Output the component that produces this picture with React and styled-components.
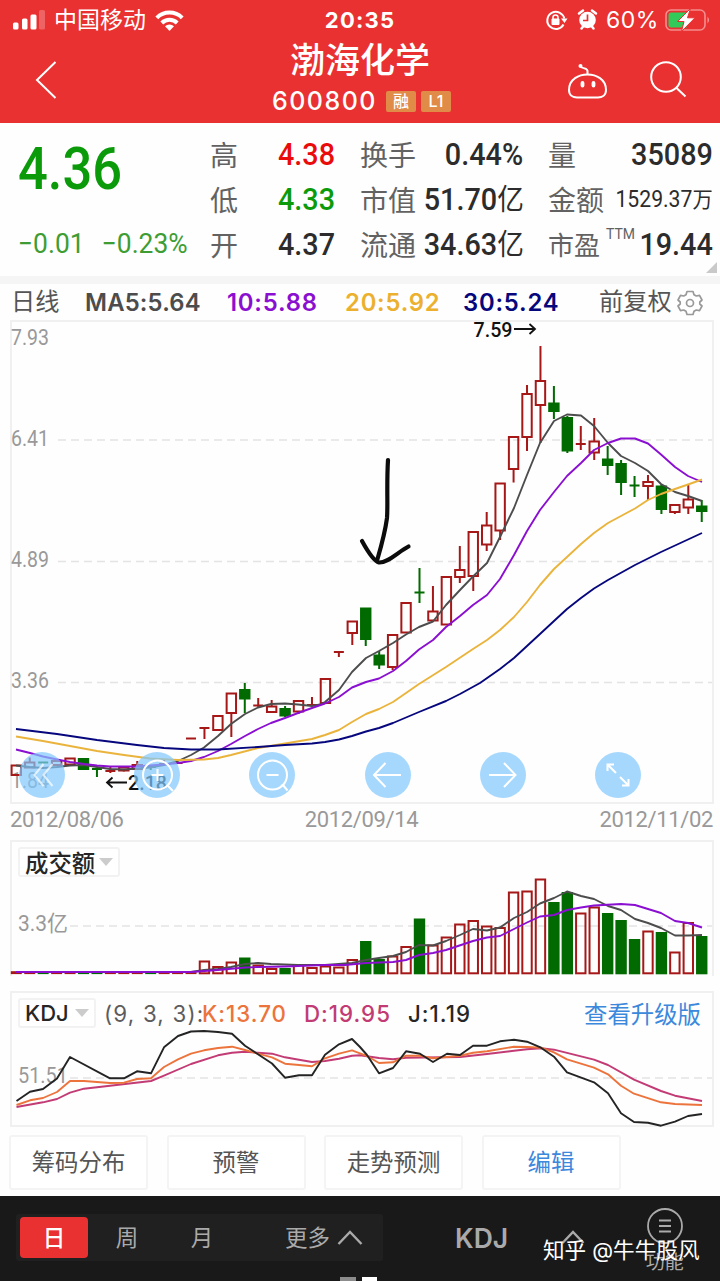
import React from "react";
import styled, { createGlobalStyle } from "styled-components";

const GlobalStyle = createGlobalStyle`
  * {
    box-sizing: border-box;
  }
  body {
    margin: 0;
    background: #fff;
    font-family: "Inter", "Noto Sans CJK SC", sans-serif;
  }
  svg {
    display: block;
    overflow: visible;
  }
`;

const din = `"Roboto", "Noto Sans CJK SC", sans-serif`;
const RED = "#a61818";
const GREEN = "#016a01";
const GRAY = "#4d4d4d";
const PURPLE = "#8a0fd0";
const GOLD = "#eab43c";
const NAVY = "#06067d";

const Screen = styled.div`
  width: 720px;
  height: 1281px;
  display: flex;
  flex-direction: column;
  background: #fefefe;
  overflow: hidden;
`;

/* ---------- header ---------- */

const Header = styled.header`
  height: 123px;
  background: #e93131;
  color: #fff;
`;

const StatusBar = styled.div`
  height: 40px;
  display: grid;
  grid-template-columns: 240px 240px 240px;
  align-items: center;
  font-size: 23px;
  line-height: 40px;
`;

const StatusLeft = styled.div`
  display: flex;
  align-items: center;
  gap: 9px;
  padding-left: 13px;
`;

const StatusRight = styled.div`
  display: flex;
  align-items: center;
  padding-left: 65px;
`;

const Clock = styled.div`
  text-align: center;
  font-size: 22px;
  font-weight: 700;
  letter-spacing: 1.2px;
`;

const Battery = styled.div`
  font-size: 23px;
  letter-spacing: 0.5px;
  margin: 0 7px 0 8px;
  width: 52px;
`;

const TitleRow = styled.div`
  height: 83px;
  display: grid;
  grid-template-columns: 240px 240px 240px;
`;

const TitleBack = styled.div`
  padding: 20px 0 0 34px;
`;

const TitleIcons = styled.div`
  display: flex;
  padding: 21px 0 0 85px;
  gap: 40px;
`;

const Title = styled.div`
  display: flex;
  flex-direction: column;
  align-items: center;
`;

const StockName = styled.div`
  font-size: 35px;
  line-height: 40px;
  font-weight: 500;
`;

const StockCode = styled.div`
  display: flex;
  align-items: center;
  gap: 5px;
  height: 42px;
  font-size: 25px;
  letter-spacing: 1.5px;
  font-weight: 500;
  padding-left: 3px;
`;

const Tag = styled.span`
  width: 30px;
  height: 21px;
  line-height: 21px;
  margin-left: ${(props) => (props.$first ? "4px" : "0")};
  border-radius: 2px;
  background: #e08c48;
  font-size: 16px;
  letter-spacing: 0;
  text-align: center;
`;

/* ---------- quote ---------- */

const Quote = styled.section`
  height: 161px;
  display: flex;
  border-bottom: 8px solid #f5f5f5;
  font-family: ${din};
  position: relative;
`;

const PriceBlock = styled.div`
  width: 210px;
  flex: none;
  padding: 15px 0 0 18px;
`;

const Price = styled.div`
  height: 62px;
  line-height: 62px;
  font-size: 59px;
  font-weight: 500;
  color: #0a9a0a;
  white-space: nowrap;
  transform: scaleX(0.89);
  transform-origin: left;
`;

const Change = styled.div`
  display: flex;
  gap: 18px;
  margin-top: 27px;
  height: 34px;
  line-height: 34px;
  font-size: 27.8px;
  color: #3d9d33;
  white-space: nowrap;
  transform: scaleX(0.95);
  transform-origin: left;
`;

const StatColumn = styled.div`
  width: ${(props) => props.$width}px;
  margin-right: ${(props) => (props.$last ? 0 : 24.5)}px;
  flex: none;
  padding-top: 9px;
`;

const Stat = styled.div`
  display: flex;
  justify-content: space-between;
  height: 45px;
  line-height: 45px;
  white-space: nowrap;
`;

const StatLabel = styled.span`
  padding-top: 2px;
  font-size: ${(props) => (props.$small ? 26 : 28)}px;
  color: #626262;
  sup {
    font-size: 14px;
    letter-spacing: 0;
    line-height: 0;
    vertical-align: 16px;
    margin-left: 6px;
  }
`;

const StatValue = styled.span`
  font-size: ${(props) => (props.$small ? 23 : 31.3)}px;
  font-weight: ${(props) => (props.$small ? 400 : 500)};
  color: ${(props) => props.$color || "#2c2c2c"};
  transform: scaleX(0.92);
  transform-origin: right;
  margin-left: -20px;
  > i {
    font-style: normal;
    font-weight: 400;
    font-size: ${(props) => (props.$small ? 22 : 29)}px;
  }
`;

const Corner = styled.i`
  position: absolute;
  right: 3px;
  bottom: 3px;
  border-left: 11px solid transparent;
  border-bottom: 11px solid #c9c9c9;
`;

/* ---------- charts ---------- */

const MaRow = styled.div`
  height: 36px;
  display: grid;
  grid-template-columns: 74px 142px 118px 118px 136px 78px 30px;
  align-items: center;
  padding: 1px 0 0 11px;
`;

const MaText = styled.span`
  color: ${(props) => props.color};
  font-weight: 600;
  letter-spacing: ${(props) => (props.$tight ? 0.2 : 0.8)}px;
  font-size: 23.8px;
  white-space: nowrap;
`;

const MaLabel = styled.span`
  color: #555;
  font-size: 24.2px;
  line-height: 32px;
  padding-bottom: 2px;
  white-space: nowrap;
`;

const ChartPanel = styled.section`
  display: grid;
  margin-left: 10px;
  width: 704px;
  height: ${(props) => props.$height}px;
  margin-bottom: ${(props) => props.$gap || 0}px;
  border: 2px solid #f0f0f0;
  border-bottom-width: ${(props) => (props.$open ? 0 : 2)}px;
  > * {
    grid-area: 1 / 1;
  }
  > svg {
    margin: -2px;
  }
`;

const ToolButtons = styled.div`
  align-self: end;
  display: flex;
  gap: 69.2px;
  padding: 0 0 4px 7px;
  z-index: 1;
`;

const RoundButton = styled.button`
  width: 46px;
  height: 46px;
  flex: none;
  padding: 0;
  border: 0;
  border-radius: 50%;
  background: rgba(128, 200, 254, 0.7);
  color: #fff;
`;

const Dates = styled.div`
  height: 36px;
  display: flex;
  justify-content: space-between;
  padding: 0 7px 0 10px;
  line-height: 31px;
  font-family: ${din};
  font-size: 22px;
  letter-spacing: -0.35px;
  color: #999;
`;

const PanelHead = styled.div`
  display: flex;
  align-items: center;
  align-self: start;
  height: 30px;
  margin: 5px 11px 0 6px;
  font-size: 22.3px;
  letter-spacing: 0.5px;
  z-index: 1;
`;

const Selector = styled.div`
  display: flex;
  align-items: center;
  justify-content: space-between;
  width: ${(props) => props.$width}px;
  height: 30px;
  padding: 0 5px;
  border: 2px solid #f2f2f2;
  border-radius: 3px;
  background: #fff;
  color: #262626;
  font-size: ${(props) => (props.$cjk ? 23.4 : 22)}px;
  letter-spacing: 0;
  font-weight: 500;
  white-space: nowrap;
  &::after {
    content: "";
    border: 7px solid transparent;
    border-top: 8px solid #ccc;
    border-bottom: 0;
  }
`;

const Indicator = styled.span`
  color: ${(props) => props.color};
  font-weight: ${(props) => props.$weight || 500};
  letter-spacing: ${(props) => (props.$weight ? 1.2 : 1)}px;
  margin-left: ${(props) => props.$left || 0}px;
  width: ${(props) => props.$width}px;
  white-space: nowrap;
`;

const Upgrade = styled.a`
  margin-left: auto;
  color: #3b88dc;
  font-size: 23.4px;
  letter-spacing: 0;
`;

/* ---------- bottom ---------- */

const Actions = styled.div`
  display: flex;
  gap: 18.5px;
  padding: 8px 9px 0;
  height: 69px;
`;

const Action = styled.button`
  width: 139px;
  height: 55px;
  padding: 0 0 3px;
  border: 2px solid #f4f4f4;
  border-radius: 3px;
  background: #fff;
  font: 23.4px "Noto Sans CJK SC", sans-serif;
  color: ${(props) => (props.$active ? "#3b88dc" : "#555")};
`;

const NavBar = styled.nav`
  position: relative;
  height: 85px;
  flex: none;
  display: flex;
  align-items: flex-start;
  padding: 18px 0 0 16px;
  background: #191919;
  color: #aaa;
`;

const Periods = styled.div`
  display: flex;
  align-items: center;
  width: 367px;
  height: 47px;
  padding-left: 4px;
  background: #202020;
  border-radius: 3px;
  font-size: 22.5px;
`;

const Period = styled.div`
  width: ${(props) => props.$width}px;
  height: 41px;
  line-height: 41px;
  border-radius: 4px;
  text-align: center;
  background: ${(props) => (props.$active ? "#e93131" : "transparent")};
  color: ${(props) => (props.$active ? "#fff" : "#aaa")};
  font-weight: ${(props) => (props.$active ? 500 : 400)};
`;

const More = styled.div`
  display: flex;
  align-items: center;
  gap: 7px;
  margin-left: 47px;
  line-height: 38px;
`;

const NavIndicator = styled.div`
  display: flex;
  align-items: center;
  gap: 53px;
  height: 48px;
  margin-left: 72px;
  font-size: 26.5px;
  font-weight: 600;
`;

const NavMenu = styled.div`
  margin: -7px 0 0 60.5px;
  display: flex;
  flex-direction: column;
  align-items: center;
  font-size: 19px;
  line-height: 36px;
`;

const Watermark = styled.div`
  position: absolute;
  left: 543px;
  top: 40px;
  line-height: 28px;
  font-size: 21.6px;
  white-space: nowrap;
  color: #fff;
`;

const Pager = styled.div`
  position: absolute;
  left: 340px;
  bottom: 0;
  display: flex;
  gap: 6px;
  > i {
    width: 15.5px;
    height: 4px;
    background: #8c8c8c;
  }
  > i:last-child {
    background: #fff;
  }
`;

/* ---------- data ---------- */

// [body top, body bottom, wick top, wick bottom, up]; top === bottom is a flat candle
const candles = [
  [765.5, 775, 765, 775, 1],
  [762.5, 767.5, 757.5, 767, 1],
  [762.5, 762.5, 762, 763, 0],
  [761, 765, 761, 765, 1],
  [758.5, 764.5, 758, 765, 1],
  [759, 769, 759, 769, 0],
  [769, 769, 769, 777, 0],
  [771, 771, 766, 773, 1],
  [767.5, 770.5, 767, 771.5, 1],
  [765, 769, 761, 769, 1],
  [767, 767, 767, 770, 0],
  [764, 764, 760, 765, 1],
  [763, 763, 763, 763, 1],
  [738.5, 738.5, 738.5, 738.5, 1],
  [728, 728, 728, 739, 1],
  [716, 730, 716, 730, 1],
  [693.5, 713, 693, 737, 1],
  [690, 698.5, 683, 713, 0],
  [705.5, 705.5, 698, 707, 1],
  [706.5, 712, 700, 712, 1],
  [709, 715.5, 706, 717, 0],
  [701, 711.5, 701, 714, 1],
  [705, 705, 697, 705, 1],
  [679, 703, 679, 704, 1],
  [652, 652, 652, 657, 1],
  [621.5, 633, 621, 645, 1],
  [608.5, 639, 608, 646, 0],
  [655.5, 664.5, 651, 669, 0],
  [635, 667, 635, 670, 1],
  [603, 632.5, 603, 632, 1],
  [592.5, 592.5, 568, 603, 0],
  [611.5, 620.5, 586, 621, 1],
  [577, 624.5, 577, 624, 1],
  [570, 577, 546, 583, 1],
  [532, 576, 532, 591, 1],
  [525.5, 544.5, 512, 551, 1],
  [483.5, 530.5, 483, 540, 1],
  [437, 469, 437, 482.5, 1],
  [394, 437, 385, 451, 1],
  [381, 405, 346, 443, 1],
  [403.5, 411, 386, 419, 0],
  [418, 450.5, 416, 453, 0],
  [444, 444, 426, 450, 1],
  [441.5, 452.5, 418, 460, 1],
  [459.5, 465, 446, 475, 0],
  [464, 482, 460, 495, 0],
  [485.5, 485.5, 476, 497, 0],
  [482, 486, 475, 500, 1],
  [486.5, 509, 484, 514, 0],
  [505, 512, 505, 514, 1],
  [499.5, 507.5, 485, 514, 1],
  [506.5, 511, 500, 522, 0],
];

const volumes = [
  972, 972, 972, 972, 972, 972, 972, 972, 972, 972, 972, 972, 972, 973, 961.5,
  967, 962.5, 958.5, 965.5, 969, 969, 965, 968, 966.5, 967.5, 960, 942, 960,
  956.5, 947, 919.5, 945.5, 937.5, 924.5, 921, 926.5, 928, 892.5, 891.5, 879.5,
  903, 893, 913.5, 907.5, 914, 921, 940, 931.5, 933, 952.5, 923, 937,
];
const volumeDown = [2, 5, 6, 10, 17, 20, 26, 27, 30, 40, 41, 44, 45, 46, 48, 51];

const ma5 =
  "16,765.5 30,767 43,768 57,767 70,765.5 84,765 97,767 110,769 124,769.5 137,768.5 150,767.5 164,765 178,761 191,755 204,747.5 218,736 231,724 245,714 258,707.5 271,704 285,703.5 298,704.5 312,706 320,704.5 325,702 339,690 352,672 366,658 379,651 393,643 406,634.5 419,627 433,621.5 446,605 460,590 473,576.5 487,563 500,537 514,508 527,475 540,443 554,421 567,414.5 581,415.5 594,426 608,443 621,456 635,463 648,471 661,484 675,492 688,496 702,501";
const ma10 =
  "16,749.5 30,753 43,756.5 57,759.5 70,762 84,764 97,765.5 110,766.5 137,766.5 150,765.5 164,764.5 178,763 191,761 204,757 218,751 231,744 245,736 258,729 271,723 285,718 298,713 312,708 325,703.5 339,697 352,687.5 366,682 379,678.5 393,671 406,661 419,649.5 433,640 446,627 460,616 473,605 487,595 500,579 514,555 527,531 540,510 554,492 567,476 581,463 594,450 608,443 621,438.5 635,438.5 648,443.5 661,454.5 675,467 688,476 702,482";
const ma20 =
  "16,736.5 43,741 70,746 97,751 124,755 150,758.5 178,760 204,759.5 218,758 231,755 258,748 285,743.5 312,739 325,735 339,730 352,722 366,714 379,709 393,702 406,693 419,684 446,667 473,649 487,640 500,630 514,617 527,602 540,585 554,569 567,557 581,544 594,533 608,523 621,516 635,508.5 648,500 661,494 675,489 688,484.5 702,479.5";
const ma30 =
  "16,729 57,734 97,740 137,745 164,748 191,749.5 218,749.5 258,747 285,745 312,743.5 325,742 339,739.5 352,736 366,731.5 379,728 393,723 419,712 446,701 460,694 480,683 500,669 514,658 527,646 540,634 554,621 567,609 581,598 594,588.5 608,580 635,565 661,552 688,539.5 702,533";

const vol5 =
  "16,972 191,972 204,970 218,969 231,967 245,964 258,963 271,964 298,965 325,965 352,963 366,960 379,958 393,956 406,952 419,945 433,945.5 446,941 460,935 473,929 487,930.5 500,927.5 514,918 527,912 540,903.5 554,898 567,891.5 581,896 594,899 608,906 621,910 635,919 648,923 661,928 675,935.5 688,935.5 702,935";
const vol10 =
  "16,972 191,972 218,970 245,967.5 258,967 285,966.5 298,966 325,965 345,965 366,963 393,962 406,960 419,955 433,953 446,950 473,941 487,937.5 500,936 514,929 527,922.5 540,916.5 554,915 567,910 581,907.5 594,905.5 621,904 635,905 648,909 661,913 675,921 688,923 702,927.5";

const lineJ =
  "16.5,1101 30,1091.7 43,1089 57,1078.5 70,1057 110,1078.3 124,1078.3 137,1071.3 151,1073.3 164,1047.3 178,1036 191,1031.5 204,1031 218,1032 232,1033.7 245,1045.7 272,1063.5 285,1077.7 299,1075.3 312,1075.3 325,1054.7 339,1044.3 352,1039 360,1047 367,1055 379,1073.3 393,1068 406,1051.3 420,1053.7 433,1062 447,1053.7 460,1055 473,1045.7 487,1045.7 500,1041.3 514,1039.7 527,1041.7 541,1047.7 554,1056.7 567,1072.3 594,1082.3 608,1093.3 621,1113.3 634,1122 648,1122.7 661,1125.7 675,1121.7 688,1116 702,1114";
const lineK =
  "16.5,1105 30,1100.3 43,1098 57,1092 70,1081 84,1081 110,1083 124,1082.7 137,1079 151,1078.3 164,1067 178,1059.3 191,1053.7 204,1050.3 218,1048 232,1046.7 245,1050 258,1053.7 272,1057.3 285,1063.7 299,1065 312,1066.3 325,1058.3 339,1053.7 352,1050.3 360,1053.3 367,1056 379,1063 393,1062.3 406,1055.7 420,1055.7 433,1058.3 460,1055.7 473,1052.7 487,1051.3 514,1046.7 527,1047 541,1047.7 554,1052.3 567,1059.3 594,1067.7 608,1074.3 621,1085.7 634,1093.7 661,1102.3 675,1104 702,1105";
const lineD =
  "16.5,1107 43,1102.3 57,1099 70,1092.7 84,1088.7 110,1085.7 151,1081 164,1075.7 191,1064 218,1055.3 232,1052.7 245,1051.7 258,1052.7 272,1053.7 285,1057.3 299,1059.7 312,1062 325,1061 339,1058.7 352,1055.7 360,1055.3 379,1058 393,1059.3 406,1057.7 460,1057 487,1054 514,1050.7 527,1049.3 541,1048.3 554,1049.7 594,1059.7 608,1065 634,1079.7 661,1091 675,1095.7 702,1101";

const xAt = (i) => 16.3 + 13.44 * i;

function Line({ points, color, width = 1.9 }) {
  return (
    <polyline
      points={points}
      fill="none"
      stroke={color}
      strokeWidth={width}
      strokeLinejoin="round"
    />
  );
}

function AxisText({ x = 11, y, width = 38, children }) {
  return (
    <text
      x={x}
      y={y}
      fill="#999"
      fontFamily="Roboto, 'Noto Sans CJK SC', sans-serif"
      fontSize="22"
      textLength={width}
      lengthAdjust="spacingAndGlyphs"
    >
      {children}
    </text>
  );
}

function GridLine({ y, from = 58 }) {
  return (
    <path
      d={`M${from} ${y}H712`}
      stroke="#e4e4e4"
      strokeWidth="1.5"
      strokeDasharray="8 5"
    />
  );
}

function Candle({ index, data }) {
  const [top, bottom, high, low, up] = data;
  const x = xAt(index);
  const color = up ? RED : GREEN;
  if (top === bottom) {
    return (
      <g stroke={color} strokeWidth="2">
        <path d={`M${x - 5} ${top}H${x + 5}M${x} ${high}V${low}`} />
      </g>
    );
  }
  return (
    <g stroke={color} strokeWidth="2">
      <path d={`M${x} ${high}V${top}M${x} ${bottom}V${low}`} />
      <rect
        x={x - 4.7}
        y={top}
        width="9.4"
        height={bottom - top}
        fill={up ? "none" : color}
      />
    </g>
  );
}

function PriceChart() {
  return (
    <svg width="704" height="484" viewBox="10 320 704 484">
      <GridLine y={440} />
      <GridLine y={561.5} />
      <GridLine y={682.5} />
      <AxisText y={345}>7.93</AxisText>
      <AxisText y={445.5}>6.41</AxisText>
      <AxisText y={566.5}>4.89</AxisText>
      <AxisText y={688}>3.36</AxisText>
      <AxisText y={787.5}>1.84</AxisText>
      {candles.map((data, i) => (
        <Candle key={i} index={i} data={data} />
      ))}
      <Line points={ma5} color={GRAY} />
      <Line points={ma10} color={PURPLE} />
      <Line points={ma20} color={GOLD} />
      <Line points={ma30} color={NAVY} />
      <g fontFamily="Roboto" fontSize="20.5" fontWeight="500" fill="#111">
        <text x="473.5" y="337" textLength="39" lengthAdjust="spacingAndGlyphs">
          7.59
        </text>
        <text x="128" y="790" textLength="39" lengthAdjust="spacingAndGlyphs">
          2.18
        </text>
      </g>
      <g fill="none" stroke="#111" strokeWidth="1.8">
        <path d="M514 329H535M529.500 324L535 329L529.500 334" />
        <path d="M127 782.500H107M112.500 777.500L107 782.500L112.500 787.500" />
      </g>
      <g fill="none" stroke="#0c0c0c" strokeWidth="4.2" strokeLinecap="round">
        <path d="M388 460C386.500 485 388 505 387 518C385 533 381 547 377.500 559" />
        <path d="M362 541C368 552 374 561 379 562.500C388 563 398 552 408.500 546.500" />
      </g>
    </svg>
  );
}

function VolumeChart() {
  return (
    <svg width="704" height="136" viewBox="10 840 704 136">
      <GridLine y={926} from={70} />
      <AxisText x={18} y={931} width={50}>
        3.3亿
      </AxisText>
      {volumes.map((top, i) => {
        const down = volumeDown.includes(i);
        return (
          <rect
            key={i}
            x={xAt(i) - 4.7}
            y={top}
            width="9.4"
            height={973.3 - top}
            fill={down ? GREEN : "none"}
            stroke={down ? GREEN : RED}
            strokeWidth={i < 14 ? 1.6 : 2}
          />
        );
      })}
      <Line points={vol5} color={GRAY} />
      <Line points={vol10} color={PURPLE} />
    </svg>
  );
}

function KdjChart() {
  return (
    <svg width="704" height="136" viewBox="10 991 704 136">
      <GridLine y={1078} from={70} />
      <AxisText x={18} y={1082.5} width={50}>
        51.51
      </AxisText>
      <Line points={lineD} color="#c23b74" />
      <Line points={lineK} color="#ec743c" />
      <Line points={lineJ} color="#242424" />
    </svg>
  );
}

const toolIcons = [
  <path d="M24.500 12L15.500 23L24.500 34M33.500 12L24.500 23L33.500 34" opacity="0.7" />,
  <>
    <circle cx="23.500" cy="23" r="14.500" />
    <path d="M23.500 17V29M17.500 23H29.500M34 34L39 39" />
  </>,
  <>
    <circle cx="23.500" cy="23" r="14.500" />
    <path d="M17.500 23H29.500M32 34L34 33L38.500 38.500" />
  </>,
  <path d="M36 23H9M20.500 11L9 23L20.500 35" />,
  <path d="M9 23H35.500M24 11L35.500 23L24 35" />,
  <path d="M21 21L12.500 12.500M12.500 19V12.500H19M25 25L33.500 33.500M33.500 27V33.500H27" />,
];

function StatusIcons() {
  return (
    <svg width="53" height="24" viewBox="545 8 53 24">
      <g fill="none" stroke="#fff" strokeWidth="2">
        <path d="M563.500 24.500A8.600 8.600 0 1 1 564.300 18.500" />
        <path d="M553 19V17.500A2.500 2.500 0 0 1 558 17.500V19" strokeWidth="1.500" />
      </g>
      <path d="M561 18.500H567.500L564.500 23Z" fill="#fff" />
      <rect x="551.500" y="18.500" width="8" height="6.500" rx="1" fill="#fff" />
      <circle cx="587.500" cy="20" r="8.300" fill="#fff" />
      <path
        d="M579 13.500L583 10.500M596 13.500L592 10.500M581.500 28.500L583.500 26M593.500 28.500L591.500 26"
        stroke="#fff"
        strokeWidth="2.500"
        strokeLinecap="round"
      />
      <path d="M587.500 14.500V20.500H583" fill="none" stroke="#e93131" strokeWidth="1.700" />
    </svg>
  );
}

function TopBar() {
  return (
    <Header>
      <StatusBar>
        <StatusLeft>
          <svg width="32" height="20" viewBox="0 0 32 20" fill="#fff">
            <rect x="0" y="12.500" width="5.500" height="7" rx="1.500" />
            <rect x="9" y="8.500" width="5.500" height="11" rx="1.500" />
            <rect x="17.500" y="4.500" width="6" height="15" rx="1.500" />
            <rect x="26" y="0" width="6" height="19.500" rx="1.500" opacity="0.25" />
          </svg>
          <span>中国移动</span>
          <svg width="29" height="21" viewBox="0 0 29 21">
            <g fill="none" stroke="#fff" strokeWidth="4">
              <path d="M1.800 7.800A18 18 0 0 1 27.200 7.800" />
              <path d="M6.800 13A11 11 0 0 1 22.200 13" />
            </g>
            <path d="M14.500 21L10 16.300A6.500 6.500 0 0 1 19 16.300Z" fill="#fff" />
          </svg>
        </StatusLeft>
        <Clock>20:35</Clock>
        <StatusRight>
          <StatusIcons />
          <Battery>60%</Battery>
          <svg width="46" height="24" viewBox="0 0 46 24">
            <rect
              x="1"
              y="2"
              width="39"
              height="20"
              rx="5"
              fill="none"
              stroke="#fff"
              strokeOpacity="0.45"
              strokeWidth="1.600"
            />
            <path d="M42.500 8.500Q45.500 12 42.500 15.500Z" fill="#fff" opacity="0.5" />
            <path d="M6 4.500H22V19.500H6Q3.500 19.500 3.500 17V7Q3.500 4.500 6 4.500Z" fill="#32cb5a" />
            <path
              d="M25.500 0.500L12.500 13.500H19L16.500 23.500L30 9.800H22.500Z"
              fill="#fff"
              stroke="#e93131"
              strokeWidth="1"
            />
          </svg>
        </StatusRight>
      </StatusBar>
      <TitleRow>
        <TitleBack>
          <svg width="24" height="40" viewBox="34 60 24 40">
            <path d="M55.500 62L37 80L55.500 98" fill="none" stroke="#fff" strokeWidth="2" />
          </svg>
        </TitleBack>
        <Title>
          <StockName>渤海化学</StockName>
          <StockCode>
            600800
            <Tag $first>融</Tag>
            <Tag>L1</Tag>
          </StockCode>
        </Title>
        <TitleIcons>
          <svg width="44" height="40" viewBox="565 61 44 40" fill="none" stroke="#fff" strokeWidth="2">
            <path d="M587.500 74.500C596 74.500 606 79 606 90C606 95.500 602 97.500 598 97.500H577C573 97.500 569 95.500 569 90C569 79 579 74.500 587.500 74.500Z" />
            <path d="M587.500 74.500V71C587.500 68 584 69 581 67" />
            <circle cx="580.500" cy="66" r="2" fill="#fff" stroke="none" />
            <path d="M582.500 83V85.500M593.500 83V85.500" strokeWidth="3.800" strokeLinecap="round" />
          </svg>
          <svg width="40" height="40" viewBox="649 61 40 40" fill="none" stroke="#fff" strokeWidth="2">
            <circle cx="666" cy="77" r="14.800" />
            <path d="M676 87.500L685.500 96.500" />
          </svg>
        </TitleIcons>
      </TitleRow>
    </Header>
  );
}

function QuoteBoard() {
  return (
    <Quote>
      <PriceBlock>
        <Price>4.36</Price>
        <Change>
          <span>−0.01</span>
          <span>−0.23%</span>
        </Change>
      </PriceBlock>
      <StatColumn $width={125.5}>
        <Stat>
          <StatLabel>高</StatLabel>
          <StatValue $color="#ea0b0b">4.38</StatValue>
        </Stat>
        <Stat>
          <StatLabel>低</StatLabel>
          <StatValue $color="#0a9a0a">4.33</StatValue>
        </Stat>
        <Stat>
          <StatLabel>开</StatLabel>
          <StatValue>4.37</StatValue>
        </Stat>
      </StatColumn>
      <StatColumn $width={163.5}>
        <Stat>
          <StatLabel>换手</StatLabel>
          <StatValue>0.44%</StatValue>
        </Stat>
        <Stat>
          <StatLabel>市值</StatLabel>
          <StatValue>
            51.70<i>亿</i>
          </StatValue>
        </Stat>
        <Stat>
          <StatLabel>流通</StatLabel>
          <StatValue>
            34.63<i>亿</i>
          </StatValue>
        </Stat>
      </StatColumn>
      <StatColumn $width={164.5} $last>
        <Stat>
          <StatLabel>量</StatLabel>
          <StatValue>35089</StatValue>
        </Stat>
        <Stat>
          <StatLabel>金额</StatLabel>
          <StatValue $small>
            1529.37<i>万</i>
          </StatValue>
        </Stat>
        <Stat>
          <StatLabel $small>
            市盈<sup>TTM</sup>
          </StatLabel>
          <StatValue>19.44</StatValue>
        </Stat>
      </StatColumn>
      <Corner />
    </Quote>
  );
}

function Gear() {
  return (
    <svg width="26" height="26" viewBox="-13 -13 26 26" fill="none" stroke="#999" strokeWidth="1.700" strokeLinejoin="round">
      <path d="M-3 -11.500H3L4 -8.300L6.300 -7L9.500 -7.700L12 -3L9.800 -1V1L12 3L9.500 7.700L6.300 7L4 8.300L3 11.500H-3L-4 8.300L-6.300 7L-9.500 7.700L-12 3L-9.800 1V-1L-12 -3L-9.500 -7.700L-6.300 -7L-4 -8.300Z" />
      <circle r="3.500" />
    </svg>
  );
}

function App() {
  return (
    <Screen>
      <GlobalStyle />
      <TopBar />
      <QuoteBoard />
      <MaRow>
        <MaLabel>日线</MaLabel>
        <MaText color="#4c4c4c" $tight>
          MA5:5.64
        </MaText>
        <MaText color={PURPLE}>10:5.88</MaText>
        <MaText color="#ecb02f">20:5.92</MaText>
        <MaText color={NAVY}>30:5.24</MaText>
        <MaLabel>前复权</MaLabel>
        <Gear />
      </MaRow>
      <ChartPanel $height={484}>
        <PriceChart />
        <ToolButtons>
          {toolIcons.map((icon, i) => (
            <RoundButton key={i}>
              <svg width="46" height="46" viewBox="0 0 46 46" fill="none" stroke="currentColor" strokeWidth="2">
                {icon}
              </svg>
            </RoundButton>
          ))}
        </ToolButtons>
      </ChartPanel>
      <Dates>
        <span>2012/08/06</span>
        <span>2012/09/14</span>
        <span>2012/11/02</span>
      </Dates>
      <ChartPanel $height={136} $gap={15} $open>
        <VolumeChart />
        <PanelHead>
          <Selector $width={102} $cjk>
            成交额
          </Selector>
        </PanelHead>
      </ChartPanel>
      <ChartPanel $height={136}>
        <KdjChart />
        <PanelHead>
          <Selector $width={78}>KDJ</Selector>
          <Indicator color="#5c5c5c" $weight={400} $left={8} $width={98}>
            (9, 3, 3):
          </Indicator>
          <Indicator color="#ec743c" $width={102}>
            K:13.70
          </Indicator>
          <Indicator color="#c23b74" $width={104}>
            D:19.95
          </Indicator>
          <Indicator color="#262626" $width={70}>
            J:1.19
          </Indicator>
          <Upgrade>查看升级版</Upgrade>
        </PanelHead>
      </ChartPanel>
      <Actions>
        <Action>筹码分布</Action>
        <Action>预警</Action>
        <Action>走势预测</Action>
        <Action $active>编辑</Action>
      </Actions>
      <NavBar>
        <Periods>
          <Period $active $width={68}>
            日
          </Period>
          <Period $width={78}>周</Period>
          <Period $width={72}>月</Period>
          <More>
            更多
            <svg width="26" height="16" viewBox="0 0 26 16">
              <path d="M1.500 14L13 2L24.500 14" fill="none" stroke="#aaa" strokeWidth="2.400" />
            </svg>
          </More>
        </Periods>
        <NavIndicator>
          KDJ
          <svg width="24" height="16" viewBox="0 0 24 16">
            <path d="M1.500 13L12 2L22.500 13" fill="none" stroke="#aaa" strokeWidth="2.400" />
          </svg>
        </NavIndicator>
        <NavMenu>
          <svg width="38" height="38" viewBox="0 0 38 38" fill="none" stroke="#aaa" strokeWidth="1.800">
            <circle cx="19" cy="19" r="17" />
            <path d="M13 13.500H25M13 19H25M13 24.500H25" />
          </svg>
          功能
        </NavMenu>
        <Watermark>知乎 @牛牛股风</Watermark>
        <Pager>
          <i />
          <i />
        </Pager>
      </NavBar>
    </Screen>
  );
}

export default App;
